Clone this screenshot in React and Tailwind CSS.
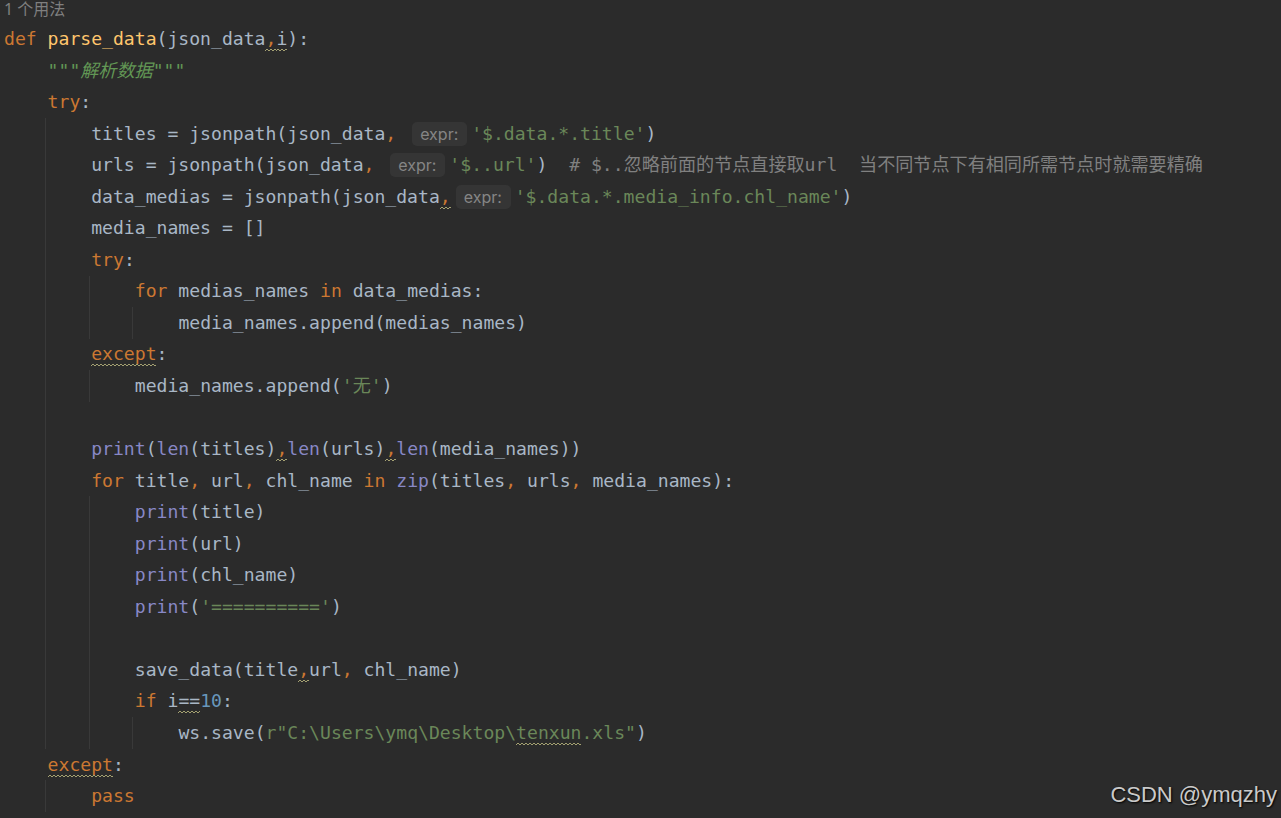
const K = "text-[#cc7832]";
const I = "text-[#a9b7c6]";
const S = "text-[#6a8759]";
const N = "text-[#6897bb]";
const B = "text-[#8888c6]";
const C = "text-[#808080]";
const F = "text-[#ffc66d]";
const D = "text-[#629755] italic";

const PILL = "pill";

// each line: [indent level, tokens]; token = [text, colour, squiggle?]
const lines = [
  [0, [["def", K], [" ", I], ["parse_data", F], ["(json_data", I], [",", K, 1], ["i", I, 1], ["):", I]]],
  [1, [['"""解析数据"""', D]]],
  [1, [["try", K], [":", I]]],
  [2, [["titles = jsonpath(json_data", I], [",", K], [" ", I], PILL, ["'$.data.*.title'", S], [")", I]]],
  [
    2,
    [
      ["urls = jsonpath(json_data", I],
      [",", K],
      [" ", I],
      PILL,
      ["'$..url'", S],
      [")", I],
      ["  # $..忽略前面的节点直接取url  当不同节点下有相同所需节点时就需要精确", C],
    ],
  ],
  [2, [["data_medias = jsonpath(json_data", I], [",", K, 1], PILL, ["'$.data.*.media_info.chl_name'", S], [")", I]]],
  [2, [["media_names = []", I]]],
  [2, [["try", K], [":", I]]],
  [3, [["for", K], [" medias_names ", I], ["in", K], [" data_medias:", I]]],
  [4, [["media_names.append(medias_names)", I]]],
  [2, [["except", K, 1], [":", I]]],
  [3, [["media_names.append(", I], ["'无'", S], [")", I]]],
  [2, []],
  [
    2,
    [
      ["print", B],
      ["(", I],
      ["len", B],
      ["(titles)", I],
      [",", K, 1],
      ["len", B],
      ["(urls)", I],
      [",", K, 1],
      ["len", B],
      ["(media_names))", I],
    ],
  ],
  [
    2,
    [
      ["for", K],
      [" title", I],
      [",", K],
      [" url", I],
      [",", K],
      [" chl_name ", I],
      ["in", K],
      [" ", I],
      ["zip", B],
      ["(titles", I],
      [",", K],
      [" urls", I],
      [",", K],
      [" media_names):", I],
    ],
  ],
  [3, [["print", B], ["(title)", I]]],
  [3, [["print", B], ["(url)", I]]],
  [3, [["print", B], ["(chl_name)", I]]],
  [3, [["print", B], ["(", I], ["'=========='", S], [")", I]]],
  [3, []],
  [3, [["save_data(title", I], [",", K, 1], ["url", I], [",", K], [" chl_name)", I]]],
  [3, [["if", K], [" i", I], ["==", I, 1], ["10", N], [":", I]]],
  [4, [["ws.save(", I], ['r"C:\\Users\\ymq\\Desktop\\', S], ["tenxun", S, 1], ['.xls"', S], [")", I]]],
  [1, [["except", K, 1], [":", I]]],
  [2, [["pass", K]]],
];

function Squiggle({ chars }) {
  const w = Math.round(chars * 10.9);
  let d = "M0 3";
  for (let x = 0; x < w; x += 4) d += ` L${x + 2} 1 L${x + 4} 3`;
  return (
    <svg
      className="absolute left-0 top-[calc(100%-2px)]"
      width={w}
      height="4"
      viewBox={`0 0 ${w} 4`}
    >
      <path d={d} fill="none" stroke="#a4a172" strokeWidth="1" />
    </svg>
  );
}

function Hint() {
  return (
    <span className="inline-flex items-center h-[24px] w-[55px] ml-[5px] mr-[4px] px-[8px] rounded-[5px] bg-[#353535] text-[#858585] text-[16px] leading-none [font-family:Inter,'Noto_Sans',sans-serif]">
      expr:
    </span>
  );
}

function CodeLine({ level, tokens }) {
  const guides = Math.max(level - 1, 0);
  const units = tokens.length ? level : guides + 1;
  return (
    <div className="flex h-[31.55px] pl-[1.5px]">
      {Array.from({ length: units }).map((_, n) => (
        <span
          key={n}
          className={
            n > 0 && n <= guides
              ? "w-[43.6px] shrink-0 border-l border-[#393939]"
              : "w-[43.6px] shrink-0"
          }
        />
      ))}
      <div className="flex items-center ml-[2.5px] leading-[22px] whitespace-pre">
        {tokens.map((t, i) =>
          t === PILL ? (
            <Hint key={i} />
          ) : (
            <span key={i} className={t[2] ? `${t[1]} relative` : t[1]}>
              {t[0]}
              {t[2] && <Squiggle chars={t[0].length} />}
            </span>
          )
        )}
      </div>
    </div>
  );
}

export default function App() {
  return (
    <div className="relative w-[1281px] h-[818px] overflow-hidden bg-[#2b2b2b] text-[18.1px] [font-family:'DejaVu_Sans_Mono','Noto_Sans_CJK_SC',monospace]">
      {/* usages hint */}
      <div className="flex items-start h-[23.2px] pl-[4px] text-[16px] leading-[18px] text-[#7f7f7f] [font-family:'Noto_Sans','Noto_Sans_CJK_SC',sans-serif]">
        1 个用法
      </div>

      {lines.map(([level, tokens], i) => (
        <CodeLine key={i} level={level} tokens={tokens} />
      ))}

      {/* watermark */}
      <div className="absolute right-[4px] top-[779px] text-[22px] leading-[32px] text-[#cacaca] [font-family:'Liberation_Sans',Arial,sans-serif] [text-shadow:1px_1px_2px_#000]">
        CSDN @ymqzhy
      </div>
    </div>
  );
}
